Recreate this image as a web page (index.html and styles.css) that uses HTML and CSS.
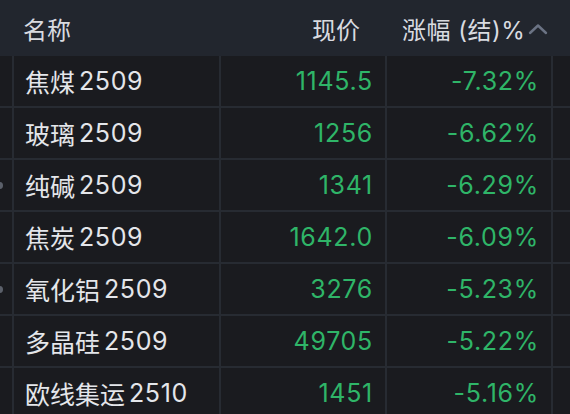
FILE: index.html
```html
<!DOCTYPE html>
<html lang="zh">
<head>
<meta charset="utf-8">
<link rel="stylesheet" href="styles.css">
</head>
<body>
<div class="board">
  <div class="head">
    <div class="h-name">名称</div>
    <div class="h-price">现价</div>
    <div class="h-chg">涨幅 (结)%<svg class="chev" width="20" height="12" viewBox="0 0 20 12"><path d="M2 10 L10 2.5 L18 10" fill="none" stroke="#6b7384" stroke-width="2.4" stroke-linecap="round" stroke-linejoin="round"/></svg></div>
  </div>
  <div class="grid">
    <div class="c edge"></div><div class="c name">焦煤<span class="code">2509</span></div><div class="c num">1145.5</div><div class="c num">-7.32%</div><div class="c"></div>
    <div class="c edge"></div><div class="c name">玻璃<span class="code">2509</span></div><div class="c num">1256</div><div class="c num">-6.62%</div><div class="c"></div>
    <div class="c edge"><span class="dot"></span></div><div class="c name">纯碱<span class="code">2509</span></div><div class="c num">1341</div><div class="c num">-6.29%</div><div class="c"></div>
    <div class="c edge"></div><div class="c name">焦炭<span class="code">2509</span></div><div class="c num">1642.0</div><div class="c num">-6.09%</div><div class="c"></div>
    <div class="c edge"><span class="dot"></span></div><div class="c name">氧化铝<span class="code">2509</span></div><div class="c num">3276</div><div class="c num">-5.23%</div><div class="c"></div>
    <div class="c edge"></div><div class="c name">多晶硅<span class="code">2509</span></div><div class="c num">49705</div><div class="c num">-5.22%</div><div class="c"></div>
    <div class="c edge"></div><div class="c name">欧线集运<span class="code">2510</span></div><div class="c num">1451</div><div class="c num">-5.16%</div><div class="c"></div>
  </div>
</div>
</body>
</html>
```

FILE: styles.css
```css
html, body {
  margin: 0;
  padding: 0;
  background: #1a1b1f;
  width: 570px;
  height: 414px;
  overflow: hidden;
}
.board {
  font-family: "Inter", "Noto Sans CJK SC", sans-serif;
  font-size: 25px;
  color: #e4e6ea;
}
.head {
  height: 56px;
  background: #22262e;
  display: flex;
  align-items: center;
  color: #d9dbe0;
  font-size: 24px;
}
.h-name {
  padding-left: 23px;
  width: 200px;
}
.h-price {
  width: 137px;
  text-align: right;
}
.h-chg {
  margin-left: 42px;
  display: flex;
  align-items: center;
  letter-spacing: 0.5px;
}
.chev {
  margin-left: 3px;
  margin-top: 1px;
}
.grid {
  display: grid;
  grid-template-columns: 12px 205px 164px 164px 1fr;
  grid-auto-rows: 50px;
  gap: 2px;
  background: #272b32;
}
.c {
  background: #1a1b1f;
  display: flex;
  align-items: center;
  position: relative;
}
.name {
  padding-left: 11px;
  white-space: nowrap;
}
.code {
  margin-left: 4px;
  letter-spacing: 0.6px;
}
.num {
  justify-content: flex-end;
  padding-right: 12px;
  color: #2fb568;
  letter-spacing: 0.7px;
}
.dot {
  position: absolute;
  left: -4px;
  top: 22px;
  width: 7px;
  height: 7px;
  border-radius: 50%;
  background: #5b606a;
}
```
